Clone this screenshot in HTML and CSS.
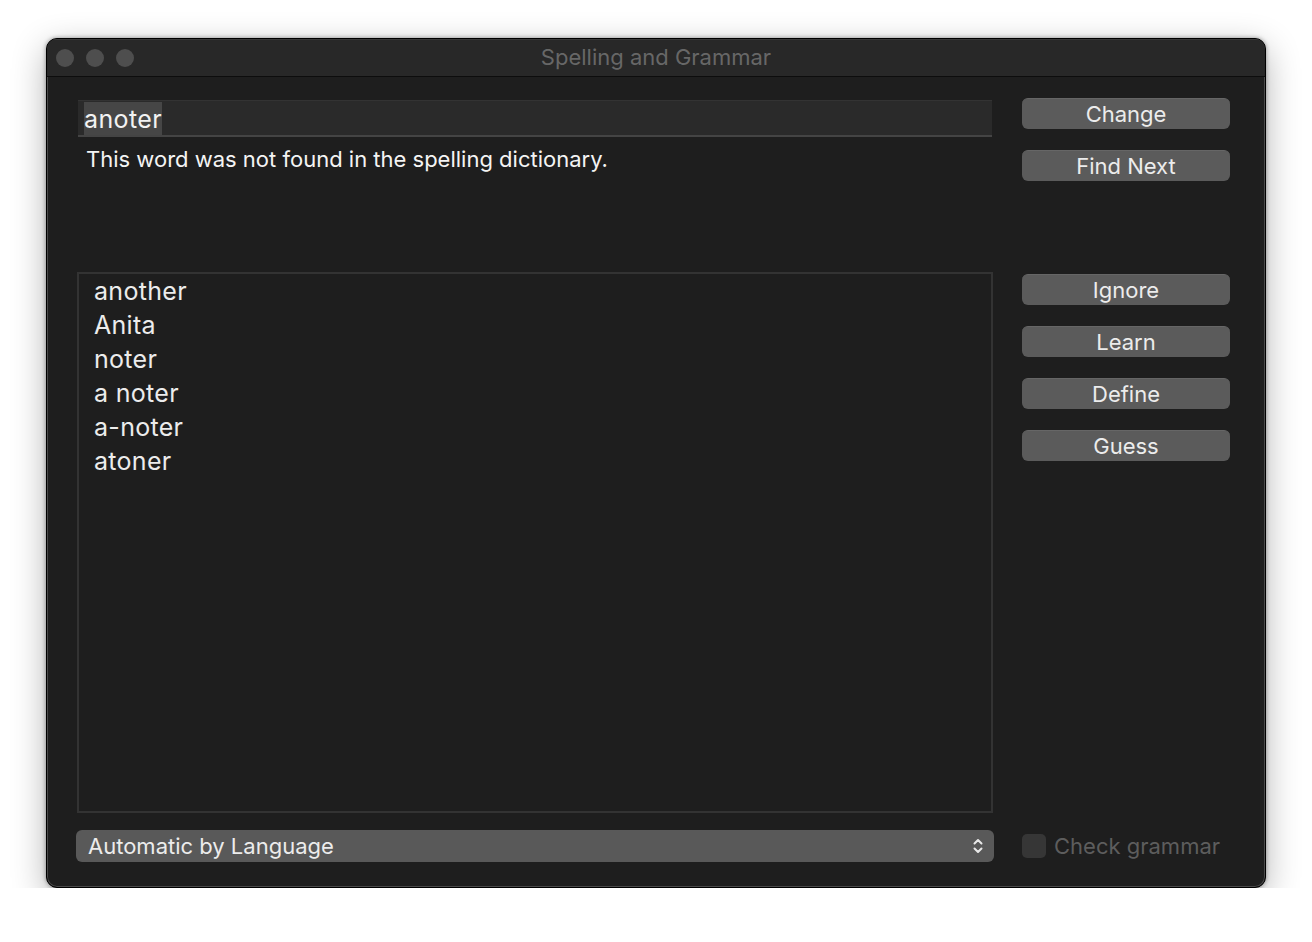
FILE: index.html
```html
<!DOCTYPE html>
<html>
<head>
<meta charset="utf-8">
<link rel="stylesheet" href="styles.css">
</head>
<body>
<div class="window">
  <div class="titlebar">
    <div class="lights"><span class="light"></span><span class="light"></span><span class="light"></span></div>
    <div class="title">Spelling and Grammar</div>
  </div>
  <div class="content">
    <div class="top-left">
      <div class="field"><span class="sel">anoter</span></div>
      <div class="message">This word was not found in the spelling dictionary.</div>
    </div>
    <div class="top-right">
      <div class="btn">Change</div>
      <div class="btn">Find Next</div>
    </div>
    <div class="list">
      <div class="item">another</div>
      <div class="item">Anita</div>
      <div class="item">noter</div>
      <div class="item">a noter</div>
      <div class="item">a-noter</div>
      <div class="item">atoner</div>
    </div>
    <div class="mid-right">
      <div class="btn">Ignore</div>
      <div class="btn">Learn</div>
      <div class="btn">Define</div>
      <div class="btn">Guess</div>
    </div>
    <div class="popup">
      <span>Automatic by Language</span>
      <svg class="chev" width="12" height="18" viewBox="0 0 12 18"><path d="M2.5 6.5 L6 3 L9.5 6.5 M2.5 11.5 L6 15 L9.5 11.5" fill="none" stroke="#e8e8e8" stroke-width="2" stroke-linecap="round" stroke-linejoin="round"/></svg>
    </div>
    <div class="check">
      <span class="box"></span>
      <span class="check-label">Check grammar</span>
    </div>
  </div>
</div>
</body>
</html>
```

FILE: styles.css
```css
* { box-sizing: border-box; }
body {
  margin: 0;
  background: #ffffff;
  font-family: "Inter", "Liberation Sans", sans-serif;
}
.window {
  margin: 38px 0 0 46px;
  width: 1220px;
  height: 850px;
  background: #1e1e1e;
  border: 1px solid #000;
  border-radius: 11px;
  box-shadow: 0 0 0 1px #4a4a4a inset, 0 10px 34px rgba(0,0,0,0.3), 0 0 4px rgba(0,0,0,0.4);
  overflow: hidden;
  display: flex;
  flex-direction: column;
}
.titlebar {
  height: 38px;
  background: #282828;
  border-bottom: 1px solid #0d0d0d;
  border-top: 1px solid #3a3a3a;
  position: relative;
  display: flex;
  align-items: center;
  justify-content: center;
}
.lights {
  position: absolute;
  left: 9px;
  top: 9px;
  display: flex;
  gap: 12px;
}
.light {
  width: 18px;
  height: 18px;
  border-radius: 50%;
  background: #4e4e4e;
}
.title {
  color: #676767;
  font-size: 22px;
  margin-top: -2px;
}
.content {
  display: grid;
  grid-template-columns: 916px 208px;
  grid-template-rows: 174px 541px 32px;
  column-gap: 29px;
  padding: 21px 0 0 30px;
}
.top-left { padding-top: 2px; }
.field {
  margin-left: 1px;
  width: 914px;
  height: 37px;
  background: #2a2a2a;
  border-top: 1px solid #333;
  border-bottom: 2px solid #444;
  padding: 1px 0 0 6px;
}
.sel {
  display: inline-block;
  background: #464646;
  color: #f2f2f2;
  font-size: 25px;
  letter-spacing: 0.4px;
  line-height: 32px;
  padding-top: 1px;
}
.message {
  color: #f4f4f4;
  font-size: 22px;
  margin: 9px 0 0 9px;
}
.btn {
  width: 208px;
  height: 31px;
  border-radius: 6px;
  background: #5b5b5b;
  border-top: 1px solid #666;
  color: #ececec;
  font-size: 22px;
  display: flex;
  align-items: center;
  justify-content: center;
  margin-bottom: 21px;
}
.mid-right { padding-top: 2px; }
.list {
  border: 2px solid #333;
  background: #1e1e1e;
  padding: 0 0 0 15px;
}
.item {
  color: #ececec;
  font-size: 25px;
  letter-spacing: 0.3px;
  line-height: 34px;
}
.popup {
  margin-top: 17px;
  margin-left: -1px;
  width: 918px;
  height: 32px;
  border-radius: 6px;
  background: #595959;
  display: flex;
  align-items: center;
  justify-content: space-between;
  padding: 0 10px 0 12px;
  color: #ececec;
  font-size: 22px;
}
.chev { display: block; }
.check {
  margin-top: 17px;
  display: flex;
  align-items: center;
  height: 32px;
}
.box {
  width: 24px;
  height: 24px;
  border-radius: 5px;
  background: #363636;
  margin-right: 8px;
}
.check-label {
  color: #5d5d5d;
  font-size: 22px;
}
```
